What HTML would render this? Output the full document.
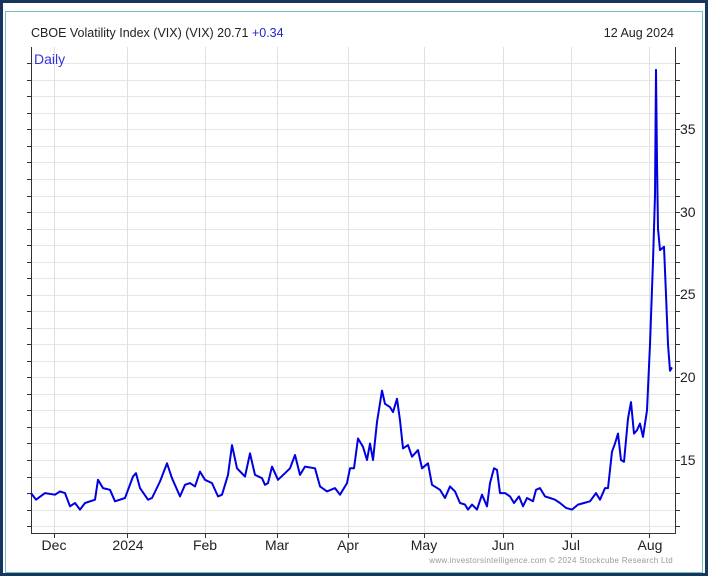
<!DOCTYPE html>
<html><head><meta charset="utf-8"><style>
html,body{margin:0;padding:0;background:#fff;}
body{width:708px;height:576px;overflow:hidden;position:relative;font-family:"Liberation Sans",Arial,sans-serif;}
</style></head><body>
<svg id="s" width="708" height="576" viewBox="0 0 708 576" xmlns="http://www.w3.org/2000/svg" style="position:absolute;left:0;top:0">
<rect x="1.5" y="1.5" width="705" height="573" fill="#fff" stroke="#17365d" stroke-width="3"/>
<rect x="5.5" y="11.5" width="697" height="561" fill="none" stroke="#6fc3c3" stroke-width="1"/>
<g id="grid"></g>
<line x1="31.5" y1="47" x2="31.5" y2="533" stroke="#333" stroke-width="1"/>
<line x1="675.5" y1="47" x2="675.5" y2="533" stroke="#333" stroke-width="1"/>
<line x1="31" y1="533.5" x2="676" y2="533.5" stroke="#333" stroke-width="1"/>
<g id="ticks"></g>
<polyline id="p" fill="none" stroke="#0000e0" stroke-width="2" stroke-linejoin="round"/>
<text x="31" y="37" font-size="12.5" fill="#222">CBOE Volatility Index (VIX) (VIX) 20.71 <tspan fill="#2222cc">+0.34</tspan></text>
<text x="674" y="37" font-size="12.5" fill="#222" text-anchor="end">12 Aug 2024</text>
<text x="34" y="64" font-size="14" fill="#3333dd">Daily</text>
<g font-size="14" fill="#222">
<text x="680" y="465">15</text><text x="680" y="382">20</text><text x="680" y="299">25</text><text x="680" y="217">30</text><text x="680" y="134">35</text>
</g>
<g font-size="14" fill="#222" text-anchor="middle">
<text x="54" y="550">Dec</text><text x="128" y="550">2024</text><text x="205" y="550">Feb</text><text x="277" y="550">Mar</text><text x="348" y="550">Apr</text><text x="424" y="550">May</text><text x="503" y="550">Jun</text><text x="571" y="550">Jul</text><text x="650" y="550">Aug</text>
</g>
<text x="673" y="563" font-size="8" fill="#999" text-anchor="end" letter-spacing="0.3">www.investorsintelligence.com © 2024 Stockcube Research Ltd</text>
</svg>
<script>
var Y=function(v){return 460-(v-15)*16.53;};
var g='',t='';
for(var v=11;v<=39;v++){var y=Y(v);if(y<48||y>532)continue;g+='<line x1="32" y1="'+(Math.round(y)+.5)+'" x2="675" y2="'+(Math.round(y)+.5)+'" stroke="#e6e6e6"/>';
t+='<line x1="27" y1="'+(Math.round(y)+.5)+'" x2="31" y2="'+(Math.round(y)+.5)+'" stroke="#333"/><line x1="676" y1="'+(Math.round(y)+.5)+'" x2="680" y2="'+(Math.round(y)+.5)+'" stroke="#333"/>';}
[54,127,205,277,348,424,503,571,649].forEach(function(x){g+='<line x1="'+(x+.5)+'" y1="47" x2="'+(x+.5)+'" y2="533" stroke="#e0e0e0"/>';t+='<line x1="'+(x+.5)+'" y1="533" x2="'+(x+.5)+'" y2="538" stroke="#333"/>';});
document.getElementById('grid').innerHTML=g;document.getElementById('ticks').innerHTML=t;
var d=[31,13.0,36,12.6,45,13.0,55,12.9,60,13.1,65,13.0,70,12.2,75,12.4,80,12.0,85,12.4,95,12.6,98,13.8,103,13.3,110,13.2,115,12.5,125,12.7,133,14.0,136,14.2,140,13.3,148,12.6,152,12.7,160,13.7,167,14.8,172,13.9,180,12.8,185,13.5,190,13.6,195,13.4,200,14.3,205,13.8,212,13.6,218,12.8,222,12.9,228,14.1,232,15.9,237,14.5,245,14.0,250,15.4,255,14.1,262,13.9,265,13.5,268,13.6,272,14.6,278,13.8,285,14.2,290,14.5,295,15.3,300,14.1,305,14.6,315,14.5,320,13.4,327,13.1,335,13.3,340,12.9,347,13.6,350,14.5,354,14.5,358,16.3,363,15.8,367,15.0,370,16.0,373,15.0,377,17.3,382,19.2,385,18.4,390,18.2,393,17.9,397,18.7,400,17.4,403,15.7,408,15.9,412,15.2,418,15.6,422,14.5,428,14.8,432,13.5,440,13.2,445,12.7,450,13.4,455,13.1,460,12.4,465,12.3,468,12.0,472,12.3,477,12.0,482,12.9,487,12.2,490,13.6,494,14.5,497,14.4,500,13.0,505,13.0,510,12.8,514,12.4,519,12.8,523,12.2,527,12.7,533,12.5,536,13.2,540,13.3,545,12.8,550,12.7,555,12.6,560,12.4,566,12.1,572,12.0,578,12.3,584,12.4,590,12.5,596,13.0,600,12.6,605,13.3,608,13.3,612,15.5,615,16.0,618,16.6,621,15.0,624,14.9,628,17.5,631,18.5,634,16.6,637,16.8,640,17.2,643,16.4,647,18.0,650,22.0,653,27.0,655,31,656,38.6,657,33.0,658,29.0,660,27.7,664,27.9,666,25,668,22,670,20.4,672,20.6];
var pts=[];for(var i=0;i<d.length;i+=2)pts.push(d[i]+','+Y(d[i+1]).toFixed(1));
document.getElementById('p').setAttribute('points',pts.join(' '));
</script>
</body></html>
